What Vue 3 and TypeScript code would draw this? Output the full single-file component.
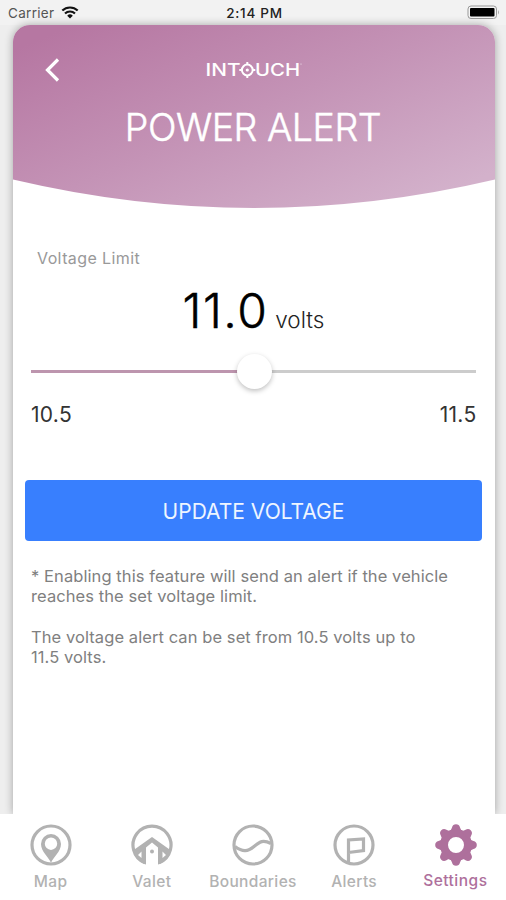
<script setup lang="ts">
import { computed, ref } from 'vue'

const min = 10.5
const max = 11.5
const voltage = ref(11.0)
const percent = computed(() => ((voltage.value - min) / (max - min)) * 100 + '%')

const tabs = ['Map', 'Valet', 'Boundaries', 'Alerts', 'Settings'] as const
const active = ref<string>('Settings')
</script>

<template>
  <div class="phone">
    <header class="status">
      <div class="carrier">
        <span>Carrier</span>
        <svg class="wifi" viewBox="0 0 18 13">
          <path d="M1.3 4.6a11 11 0 0 1 15.4 0M4 7.5a7.1 7.1 0 0 1 10 0" fill="none" stroke="#111" stroke-width="2.1" />
          <path d="M6.2 9.7a4 4 0 0 1 5.6 0L9 12.6z" fill="#111" />
        </svg>
      </div>
      <span class="time">2:14 PM</span>
      <svg class="battery" viewBox="0 0 34 15">
        <rect x="1" y="1" width="28.500" height="12.500" rx="3" fill="#f4f4f4" stroke="#999" />
        <rect x="3" y="3" width="24.500" height="8.500" rx="1" fill="#000" />
        <path d="M31 5v4.500q2-2.200 0-4.500" fill="#aaa" />
      </svg>
    </header>

    <main class="card">
      <section class="hero">
        <svg class="curve" viewBox="0 0 482 183" preserveAspectRatio="none">
          <defs>
            <linearGradient id="mauve" gradientUnits="userSpaceOnUse" x1="120" y1="-25" x2="235" y2="250">
              <stop offset="0" stop-color="#b677a2" />
              <stop offset="0.5" stop-color="#c493b6" />
              <stop offset="1" stop-color="#d3b1cb" />
            </linearGradient>
          </defs>
          <path d="M0 0H482V154.500Q361 183 241 183Q121 183 0 154.500Z" fill="url(#mauve)" />
        </svg>
        <div class="nav">
          <svg class="back" viewBox="0 0 16 24">
            <path d="M14 1.500L3.500 12L14 22.500" fill="none" stroke="#fff" stroke-width="3.200" />
          </svg>
          <svg class="logo" viewBox="0 0 96 18">
            <g class="word">
              <text x="-1.500" y="15.300" textLength="35" lengthAdjust="spacingAndGlyphs">INT</text>
              <text x="48" y="15.300" textLength="45" lengthAdjust="spacingAndGlyphs">UCH</text>
            </g>
            <g fill="none" stroke="#fff" stroke-width="2">
              <circle cx="40.300" cy="9" r="5.400" />
              <path d="M40.300 1v3M40.300 14v3M32.300 9h3M45.300 9h3" />
            </g>
            <circle cx="40.300" cy="9" r="1.600" fill="#fff" />
            <circle cx="94" cy="3" r=".5" fill="#fff" />
          </svg>
        </div>
        <h1>POWER ALERT</h1>
      </section>

      <section class="content">
        <p class="label">Voltage Limit</p>
        <p class="reading"><span class="value">{{ voltage.toFixed(1) }}</span><span class="unit">volts</span></p>
        <div class="slider">
          <div class="fill" :style="{ width: percent }"></div>
          <div class="thumb" :style="{ left: percent }"></div>
        </div>
        <div class="range"><span>10.5</span><span>11.5</span></div>
        <button class="update">UPDATE VOLTAGE</button>
        <div class="notes">
          <p>* Enabling this feature will send an alert if the vehicle<br />reaches the set voltage limit.</p>
          <p>The voltage alert can be set from 10.5 volts up to<br />11.5 volts.</p>
        </div>
      </section>
    </main>

    <nav class="tabs">
      <div v-for="tab in tabs" :key="tab" class="tab" :class="{ active: active === tab }" @click="active = tab">
        <svg class="icon" viewBox="0 0 42 42">
          <template v-if="tab !== 'Settings'">
            <path v-if="tab === 'Valet'" d="M13.500 38.500A19 19 0 1 1 28.500 38.500" class="line" />
            <circle v-else cx="21" cy="21" r="19" class="line" />
          </template>
          <template v-if="tab === 'Map'">
            <path fill-rule="evenodd" d="M21 39C19 33 11 28 11 20a10 10 0 0 1 20 0C31 28 23 33 21 39ZM21 13.500a6.200 6.200 0 1 0 0 12.400a6.200 6.200 0 1 0 0-12.400Z" class="solid" />
          </template>
          <template v-else-if="tab === 'Valet'">
            <path d="M2 26.500L21 13L40 26.500Q37 36 28.800 40L27 40.500V23.500L21 18.500L15 23.500V40.500L13.200 40Q5 36 2 26.500Z" class="solid" />
            <circle cx="21" cy="27.500" r="2" class="solid" />
            <path d="M10.500 27.500L7 31L10.500 34ZM31.500 27.500L35 31L31.500 34Z" fill="#fff" />
          </template>
          <path v-else-if="tab === 'Boundaries'" d="M3 22.500C11 28.500 16 27.500 22 22.500S31 15.500 39 19.500" class="line" />
          <path v-else-if="tab === 'Alerts'" d="M15.500 39V16L30.500 15V26.500L15.500 28.500" class="line" />
          <template v-else>
            <circle cx="21" cy="21" r="12" class="ring" />
            <path v-for="n in 8" :key="n" d="M13.500 8Q16.500 6.500 17 3.500Q17.800 .2 21 .2T25 3.500Q25.500 6.500 28.500 8Z" class="solid" :transform="`rotate(${n * 45} 21 21)`" />
          </template>
        </svg>
        <span class="caption">{{ tab }}</span>
      </div>
    </nav>
  </div>
</template>

<style>
body {
  margin: 0;
}
</style>

<style scoped>
* {
  box-sizing: border-box;
}
p,
h1 {
  margin: 0;
  font-weight: inherit;
}
.phone {
  width: 506px;
  height: 900px;
  display: flex;
  flex-direction: column;
  overflow: hidden;
  background: #eee;
  font-family: Inter, 'Liberation Sans', sans-serif;
  white-space: nowrap;
}
.status {
  height: 25px;
  display: grid;
  grid-template-columns: 1fr auto 1fr;
  padding: 0 5px 0 8px;
  line-height: 26px;
  font-size: 13.5px;
  background: #f2f2f2;
}
.carrier {
  display: flex;
  gap: 7px;
  color: #555;
  letter-spacing: 0.3px;
}
.wifi {
  width: 18px;
  height: 13px;
  margin-top: 6px;
}
.time {
  font-weight: 500;
  color: #222;
  letter-spacing: 0.75px;
}
.battery {
  width: 34px;
  height: 15px;
  justify-self: end;
  margin-top: 5px;
}
.card {
  flex: 1;
  min-height: 0;
  margin: 0 11.5px 0 12.5px;
  border-radius: 17px 17px 0 0;
  background: #fff;
  box-shadow: 0 0 9px rgba(0, 0, 0, 0.32);
}
.hero {
  position: relative;
  height: 183px;
  border-radius: 17px 17px 0 0;
  overflow: hidden;
  color: #fff;
}
.curve {
  position: absolute;
  inset: 0;
  width: 100%;
  height: 100%;
}
.nav {
  position: relative;
  display: grid;
  grid-template-columns: 1fr 96px 1fr;
  height: 79px;
  padding-top: 33px;
}
.back {
  width: 16px;
  height: 24px;
  margin-left: 31px;
}
.logo {
  width: 96px;
  height: 18px;
  margin: 3px 0 0 1px;
  overflow: visible;
}
.word {
  fill: #fff;
  font-size: 17.5px;
  font-weight: 500;
}
h1 {
  position: relative;
  text-align: center;
  font-size: 37.5px;
  line-height: 48px;
  font-weight: 300;
  letter-spacing: -0.45px;
  padding-right: 1px;
  -webkit-text-stroke: 0.5px #fff;
}
.content {
  padding: 0 12.5px;
}
.label {
  margin: 40px 0 0 12px;
  font-size: 16px;
  line-height: 20px;
  letter-spacing: 0.4px;
  color: #999;
}
.reading {
  display: flex;
  justify-content: center;
  align-items: baseline;
  gap: 7px;
  height: 60px;
  margin-top: 13px;
  line-height: 60px;
  color: #000;
}
.value {
  font-size: 48px;
  font-weight: 300;
  letter-spacing: 1.5px;
  -webkit-text-stroke: 0.5px #000;
}
.unit {
  font-size: 22.5px;
  font-weight: 300;
  color: #222;
}
.slider {
  position: relative;
  height: 3px;
  margin: 29px 6px 0;
  background: #ccc;
}
.fill {
  height: 3px;
  background: #bd95ae;
}
.thumb {
  position: absolute;
  top: -16px;
  width: 35px;
  height: 35px;
  margin-left: -17px;
  border-radius: 50%;
  background: #fff;
  box-shadow: 0 2px 5px rgba(0, 0, 0, 0.25);
}
.range {
  display: flex;
  justify-content: space-between;
  margin: 29px 5.5px 0 6px;
  font-size: 21px;
  line-height: 26px;
  letter-spacing: 0.3px;
  color: #333;
}
.update {
  display: block;
  width: 100%;
  height: 61px;
  margin-top: 52px;
  padding: 2px 0 0;
  border: 0;
  border-radius: 4px;
  background: #387ffe;
  color: #eef5ff;
  font: 400 21px Inter, 'Liberation Sans', sans-serif;
}
.notes {
  display: flex;
  flex-direction: column;
  gap: 20px;
  margin: 25px 6px 0;
  font-size: 16.5px;
  line-height: 20.4px;
  letter-spacing: 0.08px;
  color: #808080;
}
.tabs {
  position: relative;
  height: 86px;
  display: grid;
  grid-template-columns: repeat(5, 101.2px);
  background: #fff;
}
.tab {
  display: flex;
  flex-direction: column;
  align-items: center;
  padding-top: 10px;
  color: #b2b2b2;
}
.active {
  color: #ae709c;
}
.icon {
  width: 42px;
  height: 42px;
}
.tab:last-child .icon {
  margin-left: 2px;
}
.line {
  fill: none;
  stroke: currentColor;
  stroke-width: 3.2;
}
.ring {
  fill: none;
  stroke: currentColor;
  stroke-width: 8;
}
.solid {
  fill: currentColor;
}
.caption {
  margin-top: 6px;
  font-size: 15.5px;
  line-height: 20px;
  font-weight: 500;
  letter-spacing: 0.35px;
}
.active .caption {
  margin-top: 5px;
  letter-spacing: 0.5px;
}
</style>
